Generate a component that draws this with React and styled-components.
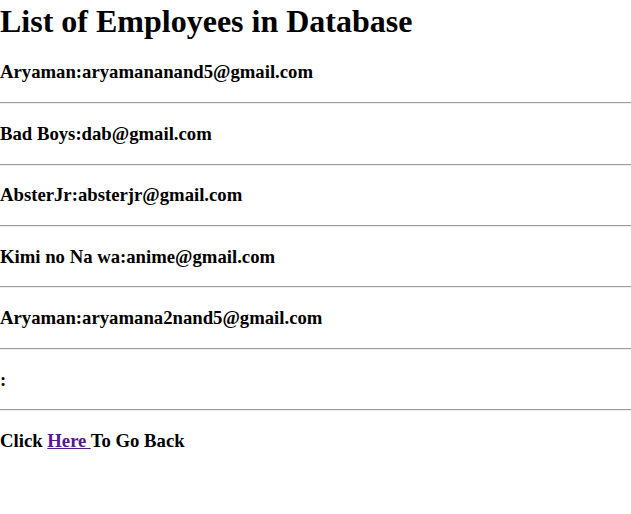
import React from "react";
import styled, { createGlobalStyle } from "styled-components";

const GlobalStyle = createGlobalStyle`
  body {
    margin: 0;
    background: #ffffff;
    font-family: "Liberation Serif", "Times New Roman", serif;
    color: #000000;
  }
`;

const Container = styled.div`
  padding-top: 3px;
`;

const Title = styled.h1`
  font-size: 32px;
  font-weight: bold;
  margin: 0 0 21.44px 0;
`;

const Employee = styled.h3`
  font-size: 18.72px;
  font-weight: bold;
  margin: 18.72px 0;
`;

const Divider = styled.hr`
  margin: 8px 0;
  border: none;
  border-top: 1px solid #9a9a9a;
  border-bottom: 1px solid #eeeeee;
  height: 0;
`;

const BackLink = styled.a`
  color: #551a8b;
  text-decoration: underline;
`;

const employees = [
  { name: "Aryaman", email: "aryamananand5@gmail.com" },
  { name: "Bad Boys", email: "dab@gmail.com" },
  { name: "AbsterJr", email: "absterjr@gmail.com" },
  { name: "Kimi no Na wa", email: "anime@gmail.com" },
  { name: "Aryaman", email: "aryamana2nand5@gmail.com" },
  { name: "", email: "" },
];

const App = () => {
  return (
    <Container>
      <GlobalStyle />
      <Title>List of Employees in Database</Title>
      {employees.map((emp, i) => (
        <div key={i}>
          <Employee>
            {emp.name}:{emp.email}
          </Employee>
          <Divider />
        </div>
      ))}
      <Employee>
        Click <BackLink href="#">Here </BackLink>To Go Back
      </Employee>
    </Container>
  );
};

export default App;
